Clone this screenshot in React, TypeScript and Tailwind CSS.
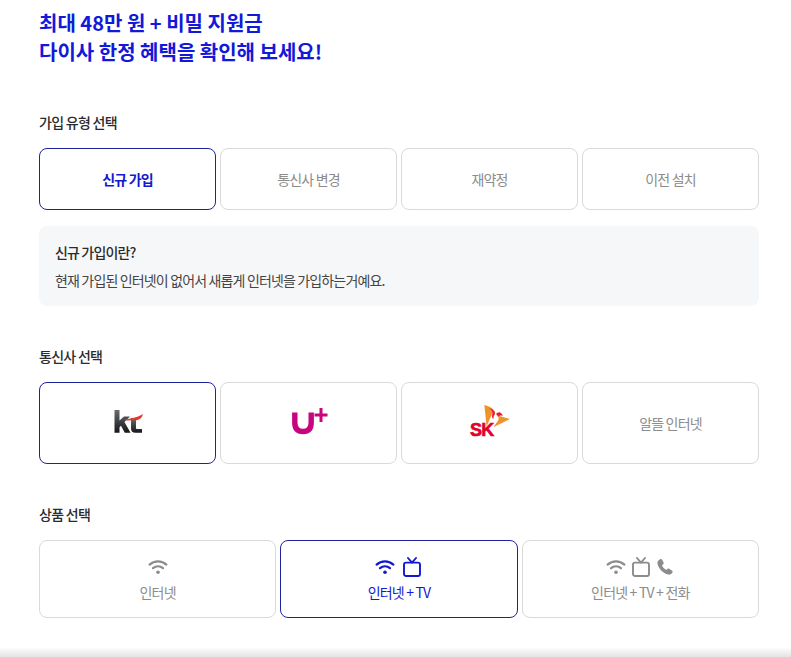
const font = "font-['Noto_Sans_CJK_KR','Noto_Sans',sans-serif]";

function Wifi({ className }: { className: string }) {
  return (
    <svg viewBox="0 0 20 16" className={className} fill="none" stroke="currentColor" strokeWidth="2.2" strokeLinecap="round">
      <path d="M1.600 5.600C6.400 1.300 13.600 1.300 18.400 5.600" />
      <path d="M5 9.200C7.900 6.800 12.100 6.800 15 9.200" />
      <circle cx="10" cy="13.200" r="1.800" fill="currentColor" stroke="none" />
    </svg>
  );
}

function Tv({ className }: { className: string }) {
  return (
    <svg viewBox="0 0 18 20" className={className} fill="none" stroke="currentColor" strokeWidth="1.9" strokeLinejoin="round" strokeLinecap="round">
      <rect x="1" y="5.600" width="16" height="13.400" rx="2" />
      <path d="M5 1L9 5.600L13 1" />
    </svg>
  );
}

function Phone({ className }: { className: string }) {
  return (
    <svg viewBox="0 0 18 18" className={className} fill="currentColor">
      <path d="M4.100 1.200C5 .7 5.800 1 6.200 1.800L7.500 4.500C7.900 5.300 7.700 6 7 6.500L6 7.200C6.700 9.100 8.300 10.900 10.300 12L11.200 11C11.800 10.400 12.500 10.300 13.200 10.700L15.900 12.400C16.700 12.900 16.900 13.700 16.400 14.500C15.500 16 14 17 12.300 16.600C6.800 15.400 2.400 10.500 1.400 5.300C1.100 3.600 2.500 2 4.100 1.200Z" />
    </svg>
  );
}

function Kt() {
  return (
    <svg viewBox="0 0 30 30" className="h-[30px] w-[30px]">
      <defs>
        <linearGradient id="ktg" x1="0" x2="0" y1="0" y2="1">
          <stop offset="0" stopColor="#6a6c70" />
          <stop offset="1" stopColor="#17171a" />
        </linearGradient>
      </defs>
      <path fill="url(#ktg)" d="M1.500 2H6.500V12.500L11 8.500H17L11.500 14L17.500 24.700H11.800L8 17.800L6.500 19.200V24.700H1.500Z" />
      <path fill="url(#ktg)" d="M18 10H23V20C23 20.800 23.500 21 24.200 21H29V24.700H22.500C19.500 24.700 18 23.300 18 20.500Z" />
      <path fill="#e8352e" d="M10.500 11.400C16 11.200 24 9.800 30 6C29.200 9.500 27 11.800 23.500 12.300L12.500 12.600Z" />
    </svg>
  );
}

function Uplus() {
  return (
    <svg viewBox="0 0 38 30" className="h-[30px] w-[38px]" fill="none" stroke="#c7057e">
      <path strokeWidth="5.400" d="M4.800 4.500V14.500C4.800 20.500 7.800 23.500 13 23.500C18.200 23.500 21.200 20.500 21.200 14.500V4.500" />
      <path strokeWidth="3" d="M24.500 7H37.500M31 0V14" />
    </svg>
  );
}

function Sk() {
  return (
    <svg viewBox="0 0 44 36" className="h-[36px] w-[44px]">
      <path fill="#f0932b" d="M16.300 0C20 1 24 2.500 25.300 5C26 7 24.500 8.500 23.700 10C22.500 12 22 14 21.300 15L18.700 21.700Z" />
      <path fill="#ea1c2c" d="M21 3C24 4 27 5.500 27 8C27 10 25 11.500 25.500 14C23.500 13 24 10.500 24.500 8.500C25 6.500 23 4.500 21 3Z" />
      <path fill="#ea1c2c" d="M28 9C30 6.500 33 6 35 11C33 10 31 10.500 30.300 12.500C29.800 11 29 10 28 9Z" />
      <path fill="#f0932b" d="M30.300 10.800L42 14L25.300 22.300C27 19.500 29.500 17 30.500 14.500C30.800 13 30.500 12 30.300 10.800Z" />
      <text x="2" y="31" fontFamily="'Liberation Sans',sans-serif" fontWeight="700" fontSize="18" fill="#e3002b" stroke="#e3002b" strokeWidth=".6">SK</text>
    </svg>
  );
}

function Option({
  active,
  className,
  children,
}: {
  active?: boolean;
  className: string;
  children: React.ReactNode;
}) {
  return (
    <div
      className={`flex flex-col items-center justify-center rounded-lg border text-[14px] tracking-[-0.8px] ${className} ${
        active ? "border-[#1e249c] text-[#1219d0]" : "border-[#d9d9d9] text-[#8c8c8c]"
      }`}
    >
      {children}
    </div>
  );
}

function Label({ children }: { children: React.ReactNode }) {
  return <h2 className="text-[14px] leading-[20px] font-medium tracking-[-0.72px] text-[#2b2b2b]">{children}</h2>;
}

export default function App() {
  return (
    <div className={`${font} relative h-[657px] w-[791px] overflow-hidden bg-white pl-[39px] pr-[32px] pt-[8px]`}>
      <h1 className="text-[20px] leading-[29px] font-bold text-[#1219d8]">
        최대 48만 원 + 비밀 지원금
        <br />
        다이사 한정 혜택을 확인해 보세요!
      </h1>

      <section className="mt-[46px]">
        <Label>가입 유형 선택</Label>
        <div className="mt-[16px] grid grid-cols-4 gap-[4px]">
          <Option active className="h-[62px] font-bold">신규 가입</Option>
          <Option className="h-[62px]">통신사 변경</Option>
          <Option className="h-[62px]">재약정</Option>
          <Option className="h-[62px]">이전 설치</Option>
        </div>
        <div className="mt-[16px] h-[80px] rounded-lg bg-[#f6f7f9] px-[16px] pt-[16px] tracking-[-0.85px]">
          <p className="text-[14px] leading-[20px] font-medium text-[#2b2b2b]">신규 가입이란?</p>
          <p className="mt-[8px] text-[14px] leading-[20px] text-[#444444]">
            현재 가입된 인터넷이 없어서 새롭게 인터넷을 가입하는거예요.
          </p>
        </div>
      </section>

      <section className="mt-[40px]">
        <Label>통신사 선택</Label>
        <div className="mt-[16px] grid grid-cols-4 gap-[4px]">
          <Option active className="h-[82px]"><Kt /></Option>
          <Option className="h-[82px]"><Uplus /></Option>
          <Option className="h-[82px]"><Sk /></Option>
          <Option className="h-[82px]">알뜰 인터넷</Option>
        </div>
      </section>

      <section className="mt-[40px]">
        <Label>상품 선택</Label>
        <div className="mt-[16px] grid grid-cols-3 gap-[4px]">
          <Option className="h-[78px] gap-[5px]">
            <div className="flex h-[20px] items-center gap-[6px]">
              <Wifi className="h-[16px] w-[20px]" />
            </div>
            <span className="leading-[20px]">인터넷</span>
          </Option>
          <Option active className="h-[78px] gap-[5px]">
            <div className="flex h-[20px] items-center gap-[8px] pr-[2px]">
              <Wifi className="h-[16px] w-[20px]" />
              <Tv className="h-[20px] w-[18px]" />
            </div>
            <span className="leading-[20px]">인터넷 + TV</span>
          </Option>
          <Option className="h-[78px] gap-[5px]">
            <div className="flex h-[20px] items-center gap-[6px]">
              <Wifi className="h-[16px] w-[20px]" />
              <Tv className="h-[20px] w-[18px]" />
              <Phone className="h-[18px] w-[18px]" />
            </div>
            <span className="leading-[20px]">인터넷 + TV + 전화</span>
          </Option>
        </div>
      </section>

      <div className="absolute inset-x-0 bottom-0 h-[10px] bg-gradient-to-b from-white to-[#e4e4e4]" />
    </div>
  );
}
